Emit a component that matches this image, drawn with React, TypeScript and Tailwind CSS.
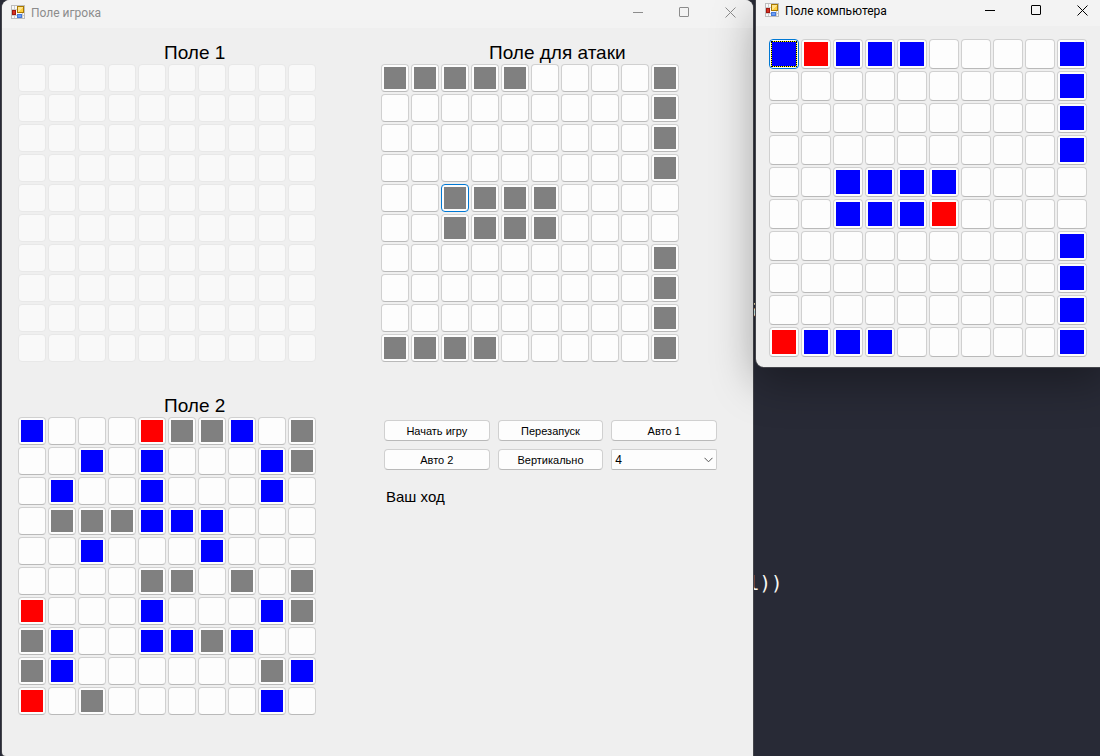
import { useState } from "react";

type Size = "sm" | "lg";

const OWN_FIELD = [
  "B...RGGB.G",
  "..B.B...BG",
  ".B..B...B.",
  ".GGGBBB...",
  "..B...B...",
  "....GG.G.G",
  "R...B...BG",
  "GB..BBGB..",
  "GB......GB",
  "R.G.....B.",
];

const ATTACK_FIELD = [
  "GGGGG....G",
  ".........G",
  ".........G",
  ".........G",
  "..GGGG....",
  "..GGGG....",
  ".........G",
  ".........G",
  ".........G",
  "GGGG.....G",
];

const COMPUTER_FIELD = [
  "BRBBB....B",
  ".........B",
  ".........B",
  ".........B",
  "..BBBB....",
  "..BBBR....",
  ".........B",
  ".........B",
  ".........B",
  "RBBB.....B",
];

const EMPTY_FIELD = Array.from({ length: 10 }, () => "..........");

const FILL: Record<string, string> = {
  B: "bg-[#0000ff]",
  R: "bg-[#ff0000]",
  G: "bg-[#808080]",
  ".": "bg-transparent",
};

interface BoardProps {
  name: string;
  rows: string[];
  size?: Size;
  disabled?: boolean;
  active?: string;
  dotted?: boolean;
}

function Board({ name, rows, size = "sm", disabled, active, dotted }: BoardProps) {
  return (
    <div role="group" aria-label={name} className="grid w-max grid-cols-10 gap-[2px]">
      {rows.flatMap((row, r) =>
        row.split("").map((cell, c) => {
          const isActive = active === `${r}-${c}`;
          const border = isActive
            ? "border-[#0078d4] bg-[#fdfdfd]"
            : disabled
              ? "border-[#e8e8e8] bg-[#f9f9f9]"
              : "border-[#d0d0d0] border-b-[#b9b9b9] bg-[#fdfdfd]";
          const fill = (
            <span className={`block ${size === "lg" ? "size-6" : "size-[22px]"} ${FILL[cell]}`} />
          );
          return (
            <button
              key={`${r}-${c}`}
              type="button"
              disabled={disabled}
              aria-label={`${name}: ${r + 1}, ${c + 1}`}
              className={`flex items-center justify-center rounded border ${size === "lg" ? "size-[30px]" : "size-7"} ${border}`}
            >
              {isActive && dotted ? (
                <span className="border border-dotted border-black bg-[#ffff00]">{fill}</span>
              ) : (
                fill
              )}
            </button>
          );
        }),
      )}
    </div>
  );
}

function FormIcon() {
  return (
    <svg width="14" height="14" viewBox="0 0 14 14" aria-hidden="true" shapeRendering="crispEdges">
      <rect x="0.5" y="0.5" width="13" height="13" fill="#f8f8f8" stroke="#bdbdbd" />
      <path d="M3.5 1v4M1 4.5h5M1 10.5h12M3.5 10v3M11.5 8v5" stroke="#cccccc" fill="none" />
      <rect x="6.5" y="1.5" width="6" height="6" fill="#ffcf40" stroke="#a87800" />
      <path d="M7 2h5L7 7z" fill="#ffe48a" />
      <rect x="1.5" y="5.5" width="3" height="4" fill="#d83020" stroke="#a01810" />
      <rect x="6.5" y="9.5" width="4" height="3" fill="#6ba0f5" stroke="#4678d8" />
    </svg>
  );
}

function TitleBar({ title, focused }: { title: string; focused?: boolean }) {
  const tone = focused ? "text-black" : "text-[#8c8c8c]";
  return (
    <header className={`flex items-center bg-[#f3f3f3] pl-[9px] ${focused ? "h-[26px] pb-1.5" : "h-7 pb-1"}`}>
      <FormIcon />
      <h1 className={`flex-1 pt-0.5 pl-1.5 font-[Roboto,'Noto_Sans',sans-serif] text-xs leading-4 ${tone}`}>{title}</h1>
      <div className={`flex ${tone}`}>
        <button type="button" aria-label="Свернуть" className="flex w-[46px] justify-center">
          <svg width="11" height="11" viewBox="0 0 11 11">
            <path d="M0 5.5h10" stroke="currentColor" />
          </svg>
        </button>
        <button type="button" aria-label="Развернуть" className="flex w-[46px] justify-center">
          <svg width="11" height="11" viewBox="0 0 11 11">
            <rect x="0.5" y="0.5" width="9" height="9" rx="0.5" fill="none" stroke="currentColor" />
          </svg>
        </button>
        <button type="button" aria-label="Закрыть" className="flex w-[46px] justify-center">
          <svg width="11" height="11" viewBox="0 0 11 11">
            <path d="M0.5 0.5l10 10M10.5 0.5l-10 10" stroke="currentColor" />
          </svg>
        </button>
      </div>
    </header>
  );
}

function FormButton({ children }: { children: string }) {
  return (
    <button
      type="button"
      className="h-[21px] rounded border border-[#d0d0d0] border-b-[#b9b9b9] bg-[#fdfdfd] text-[11px] leading-4"
    >
      {children}
    </button>
  );
}

function Controls() {
  const [length, setLength] = useState("4");
  return (
    <div className="pt-[27px] pl-[3px]">
      <div className="grid w-[333px] grid-cols-3 gap-x-2 gap-y-2">
        <FormButton>Начать игру</FormButton>
        <FormButton>Перезапуск</FormButton>
        <FormButton>Авто 1</FormButton>
        <FormButton>Авто 2</FormButton>
        <FormButton>Вертикально</FormButton>
        <div className="grid items-center">
          <select
            aria-label="Длина корабля"
            value={length}
            onChange={(e) => setLength(e.target.value)}
            className="col-start-1 row-start-1 h-[21px] appearance-none rounded-xs border border-[#d0d0d0] border-b-[#b9b9b9] bg-[#fdfdfd] pl-[3px] text-xs leading-4"
          >
            <option>4</option>
            <option>3</option>
            <option>2</option>
            <option>1</option>
          </select>
          <svg
            width="9"
            height="6"
            viewBox="0 0 9 6"
            aria-hidden="true"
            className="pointer-events-none col-start-1 row-start-1 mr-1 justify-self-end"
          >
            <path d="M0.5 0.8l4 4 4-4" fill="none" stroke="#555555" />
          </svg>
        </div>
      </div>
      <p className="pt-4 pl-[2px] text-[15px] leading-[22px]">Ваш ход</p>
    </div>
  );
}

function PlayerWindow() {
  return (
    <section className="absolute top-0 left-[2px] flex h-full w-[751px] flex-col rounded-t-lg rounded-bl-sm bg-[#efefef] shadow-[0_0_0_1px_#44454b]">
      <div className="overflow-hidden rounded-t-lg">
        <TitleBar title="Поле игрока" />
      </div>
      <main className="grid w-max grid-cols-[auto_auto] gap-x-[65px] gap-y-[31px] pt-3 pl-4">
        <div>
          <h2 className="h-6 pl-[146px] text-[19px] leading-[26px]">Поле 1</h2>
          <Board name="Поле 1" rows={EMPTY_FIELD} disabled />
        </div>
        <div>
          <h2 className="h-6 pl-[108px] text-[19px] leading-[26px]">Поле для атаки</h2>
          <Board name="Поле для атаки" rows={ATTACK_FIELD} active="4-2" />
        </div>
        <div>
          <h2 className="h-6 pl-[146px] text-[19px] leading-[26px]">Поле 2</h2>
          <Board name="Поле 2" rows={OWN_FIELD} />
        </div>
        <Controls />
      </main>
    </section>
  );
}

function ComputerWindow() {
  return (
    <section className="absolute top-0 left-[756px] w-[349px] overflow-hidden rounded-bl-lg bg-[#efefef] shadow-[0_0_0_1px_#44454b,0_14px_44px_rgba(0,0,0,0.35)]">
      <TitleBar title="Поле компьютера" focused />
      <main className="pt-[13px] pb-[10px] pl-[13px]">
        <Board name="Поле компьютера" rows={COMPUTER_FIELD} size="lg" active="0-0" dotted />
      </main>
    </section>
  );
}

export default function App() {
  return (
    <div className="relative h-screen overflow-hidden bg-[#282a36] font-['Liberation_Sans',Arial,sans-serif] text-black">
      <code className="absolute top-[298px] left-[746px] font-['DejaVu_Sans_Mono',monospace] text-[19px] leading-6 text-[#f8f8f2]">
        5
      </code>
      <code className="absolute top-[571px] left-[748px] font-['DejaVu_Sans_Mono',monospace] text-[19px] leading-6 text-[#f8f8f2]">
        l))
      </code>
      <PlayerWindow />
      <ComputerWindow />
    </div>
  );
}
